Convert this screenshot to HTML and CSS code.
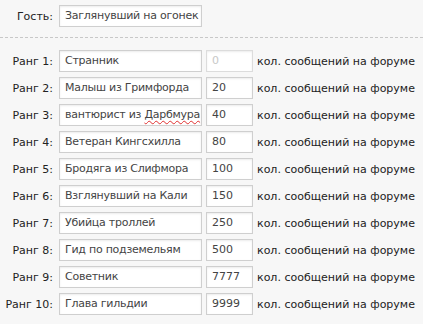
FILE: index.html
```html
<!DOCTYPE html>
<html lang="ru">
<head>
<meta charset="utf-8">
<link rel="stylesheet" href="styles.css">
</head>
<body>
<div class="page">
  <div class="row guest">
    <span class="label">Гость:</span>
    <div class="field text">Заглянувший на огонек</div>
  </div>
  <div class="sep"></div>
  <div class="ranks">
    <div class="row"><span class="label">Ранг 1:</span><div class="field text">Странник</div><div class="field num disabled">0</div><span class="note">кол. сообщений на форуме</span></div>
    <div class="row"><span class="label">Ранг 2:</span><div class="field text">Малыш из Гримфорда</div><div class="field num">20</div><span class="note">кол. сообщений на форуме</span></div>
    <div class="row"><span class="label">Ранг 3:</span><div class="field text">вантюрист из <span class="spell">Дарбмура</span></div><div class="field num">40</div><span class="note">кол. сообщений на форуме</span></div>
    <div class="row"><span class="label">Ранг 4:</span><div class="field text">Ветеран Кингсхилла</div><div class="field num">80</div><span class="note">кол. сообщений на форуме</span></div>
    <div class="row"><span class="label">Ранг 5:</span><div class="field text">Бродяга из Слифмора</div><div class="field num">100</div><span class="note">кол. сообщений на форуме</span></div>
    <div class="row"><span class="label">Ранг 6:</span><div class="field text">Взглянувший на Кали</div><div class="field num">150</div><span class="note">кол. сообщений на форуме</span></div>
    <div class="row"><span class="label">Ранг 7:</span><div class="field text">Убийца троллей</div><div class="field num">250</div><span class="note">кол. сообщений на форуме</span></div>
    <div class="row"><span class="label">Ранг 8:</span><div class="field text">Гид по подземельям</div><div class="field num">500</div><span class="note">кол. сообщений на форуме</span></div>
    <div class="row"><span class="label">Ранг 9:</span><div class="field text">Советник</div><div class="field num">7777</div><span class="note">кол. сообщений на форуме</span></div>
    <div class="row"><span class="label">Ранг 10:</span><div class="field text">Глава гильдии</div><div class="field num">9999</div><span class="note">кол. сообщений на форуме</span></div>
  </div>
</div>
</body>
</html>
```
FILE: styles.css
```css
html, body {
  margin: 0;
  padding: 0;
  background: #f7f7f7;
}
.page {
  font-family: "DejaVu Sans", Verdana, sans-serif;
  font-size: 11px;
  color: #222;
  padding-top: 5px;
  width: 423px;
  height: 324px;
  overflow: hidden;
}
.row {
  display: flex;
  align-items: center;
  height: 22px;
  white-space: nowrap;
}
.label {
  width: 53px;
  text-align: right;
  margin-right: 6px;
  flex: none;
}
.field {
  box-sizing: border-box;
  height: 22px;
  line-height: 20px;
  border: 1px solid #cfcfcf;
  background: #fff;
  box-shadow: inset 0 1px 2px rgba(0,0,0,0.08);
  color: #444;
  padding: 0 4px 0 5px;
  overflow: hidden;
  white-space: nowrap;
  flex: none;
  letter-spacing: -0.25px;
}
.text { width: 143px; }
.num { width: 47px; margin-left: 4px; letter-spacing: 0; }
.disabled { color: #c8c8c8; border-color: #dcdcdc; }
.note { margin-left: 4px; }
.sep {
  margin-top: 10px;
  border-top: 1px dashed #c8c8c8;
  margin-bottom: 12px;
}
.ranks {
  display: flex;
  flex-direction: column;
  gap: 5px;
}
.spell {
  text-decoration: underline wavy #e03030;
  text-decoration-thickness: 1px;
  text-underline-offset: 2px;
}
```
